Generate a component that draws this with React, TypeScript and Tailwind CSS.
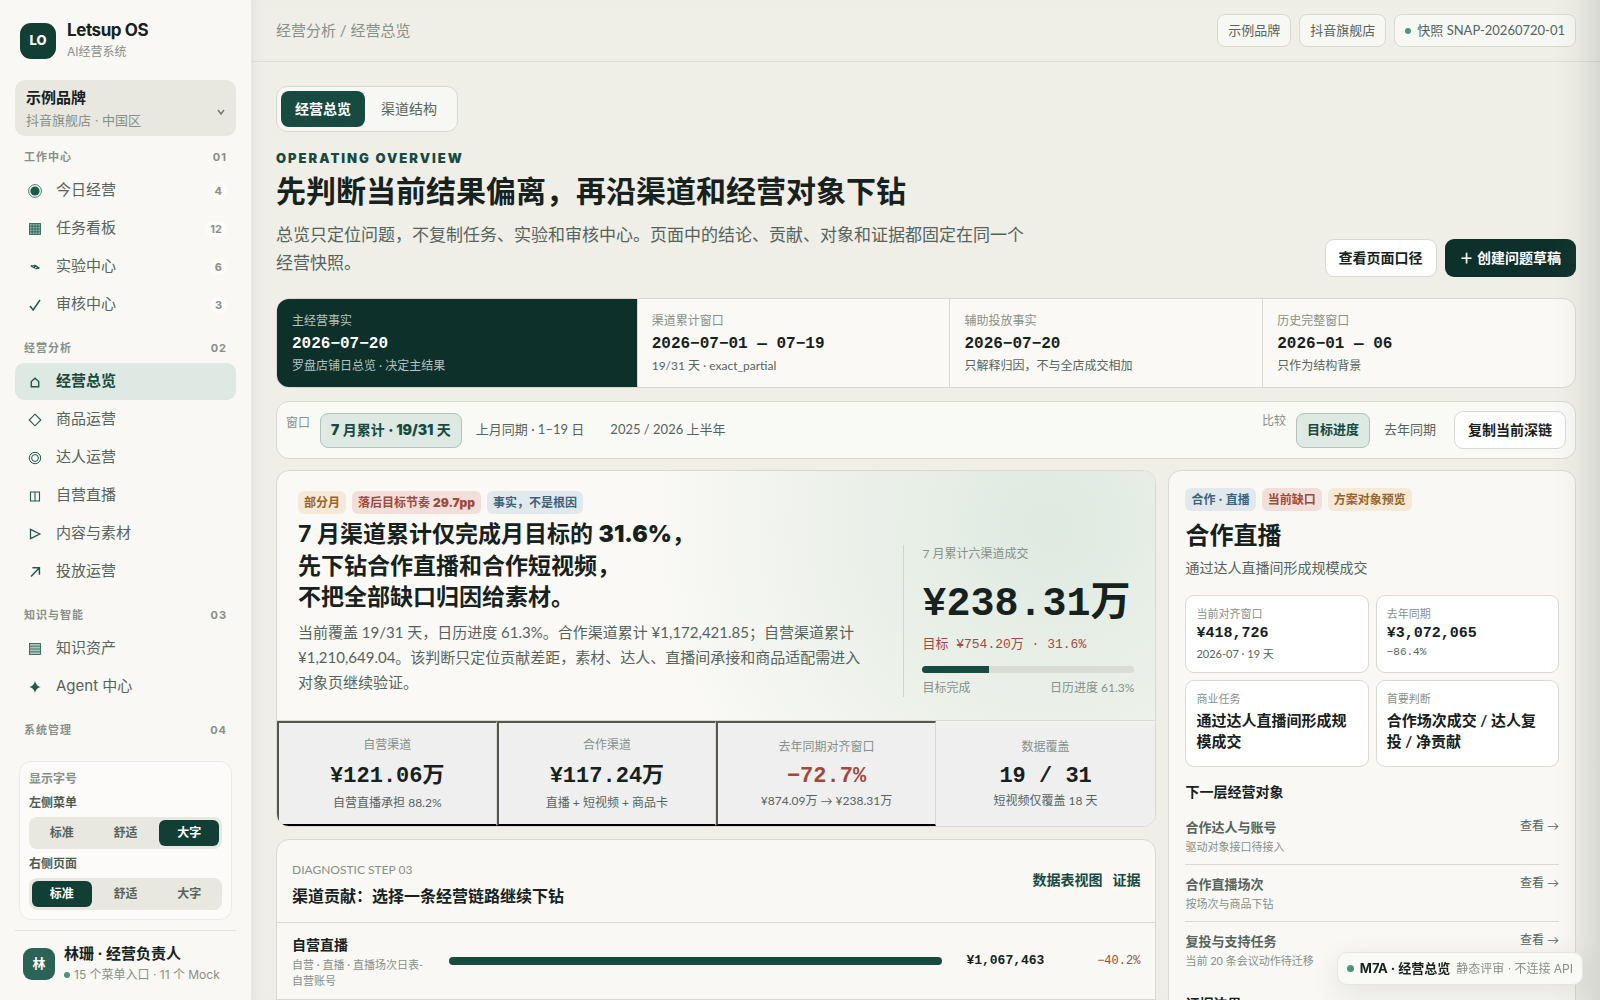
import { useState } from "react";
import type { ReactNode } from "react";

const GROUPS = [
  {
    title: "工作中心",
    no: "01",
    items: [
      { icon: "target", label: "今日经营", count: "4" },
      { icon: "board", label: "任务看板", count: "12" },
      { icon: "pulse", label: "实验中心", count: "6" },
      { icon: "check", label: "审核中心", count: "3" },
    ],
  },
  {
    title: "经营分析",
    no: "02",
    items: [
      { icon: "home", label: "经营总览", active: true },
      { icon: "diamond", label: "商品运营" },
      { icon: "rings", label: "达人运营" },
      { icon: "split", label: "自营直播" },
      { icon: "play", label: "内容与素材" },
      { icon: "arrow", label: "投放运营" },
    ],
  },
  {
    title: "知识与智能",
    no: "03",
    items: [
      { icon: "lines", label: "知识资产" },
      { icon: "star", label: "Agent 中心" },
    ],
  },
  { title: "系统管理", no: "04", items: [] },
] as {
  title: string;
  no: string;
  items: { icon: string; label: string; count?: string; active?: boolean }[];
}[];

const GLYPHS: Record<string, ReactNode> = {
  target: (
    <>
      <circle cx="8" cy="8" r="6.4" strokeWidth="0.8" />
      <circle cx="8" cy="8" r="4.6" fill="currentColor" stroke="none" />
    </>
  ),
  board: (
    <>
      <rect x="2" y="2" width="12" height="12" fill="#8fb0a6" stroke="none" />
      <path d="M2.5 2.5h11v11h-11zM5.2 2.5v11M8 2.5v11M10.8 2.5v11M2.5 5.2h11M2.5 8h11M2.5 10.8h11" strokeWidth="0.7" />
    </>
  ),
  pulse: <path d="M3.8 6.6l3.6 2.2.6-2.4 4.4 3M4.2 7.6l3-1M8.4 9.6l3.400-.6" strokeWidth="1.3" />,
  check: <path d="M3 9l3.2 4L13 3" strokeWidth="1.5" />,
  home: <path d="M4.3 12.8V7.6L8 4.2l3.7 3.4v5.2z" strokeWidth="1.4" />,
  diamond: <path d="M8 2.2L13.8 8 8 13.8 2.2 8z" strokeWidth="1.1" />,
  rings: (
    <>
      <circle cx="8" cy="8" r="5.7" strokeWidth="1" />
      <circle cx="8" cy="8" r="3.4" strokeWidth="1" />
    </>
  ),
  split: <path d="M3.5 4h9v9h-9zM8 4v9" strokeWidth="1.1" />,
  play: <path d="M3.5 3.4L12.8 8l-9.3 4.6z" strokeWidth="1.3" />,
  arrow: <path d="M4 12.4l8.4-8.6M5.4 3.8h7v7" strokeWidth="1.5" />,
  lines: (
    <>
      <rect x="2.5" y="2.5" width="11" height="11" fill="#a9c3bb" strokeWidth="0.8" />
      <path d="M2.5 5.2h11M2.5 8h11M2.5 10.8h11" strokeWidth="0.7" />
    </>
  ),
  star: <path d="M8 2c.9 3.6 2.4 5.1 6 6-3.6.9-5.1 2.4-6 6-.9-3.6-2.4-5.1-6-6 3.6-.9 5.1-2.4 6-6z" fill="currentColor" stroke="none" />,
};

function Glyph({ name }: { name: string }) {
  return (
    <svg viewBox="0 0 16 16" className="size-4 shrink-0 text-[#1d5a4c]" fill="none" stroke="currentColor" aria-hidden="true">
      {GLYPHS[name]}
    </svg>
  );
}

function SizeSwitch({ label, initial }: { label: string; initial: string }) {
  const [value, setValue] = useState(initial);
  return (
    <div role="group" aria-label={label}>
      <div className="mb-1 text-xs leading-5 font-bold text-[#4c5c54]">{label}</div>
      <div className="grid grid-cols-3 gap-1 rounded-lg bg-[#e8e7e0] p-[3px]">
        {["标准", "舒适", "大字"].map((o) => (
          <button
            key={o}
            type="button"
            aria-pressed={value === o}
            onClick={() => setValue(o)}
            className={
              value === o
                ? "h-[26px] rounded-md bg-[#123f35] text-xs font-bold text-white"
                : "h-[26px] rounded-md text-xs font-bold text-[#56645d]"
            }
          >
            {o}
          </button>
        ))}
      </div>
    </div>
  );
}

function Sidebar() {
  return (
    <aside className="flex h-full w-[251px] shrink-0 flex-col bg-[#f9f8f4] px-[15px] pt-5 font-['Inter','Noto_Sans_CJK_SC',sans-serif]">
      <div className="flex items-center gap-[11px] px-[5px]">
        <div className="grid size-9 place-items-center rounded-[11px] bg-[#123f35] text-[13px] font-extrabold text-white">LO</div>
        <div>
          <div className="text-[17px] leading-[21px] font-bold tracking-tight text-[#17211d]">Letsup OS</div>
          <div className="text-xs leading-[21px] text-[#87908a]">AI经营系统</div>
        </div>
      </div>

      <button type="button" className="mt-[18px] flex h-14 shrink-0 items-center justify-between rounded-[10px] bg-[#e8e7e0] pr-2.5 pl-[11px] text-left">
        <span>
          <span className="block text-[15px] leading-6 font-bold text-[#17211d]">示例品牌</span>
          <span className="block text-[13px] leading-[21px] text-[#87908a]">抖音旗舰店 · 中国区</span>
        </span>
        <svg viewBox="0 0 10 10" className="mt-2 size-2.5" fill="none" stroke="#6f7a74" strokeWidth="1.5" aria-hidden="true">
          <path d="M2 3l3 4 3-4" />
        </svg>
      </button>

      <nav className="min-h-0 flex-1 overflow-hidden pt-[9px]">
        {GROUPS.map((g) => (
          <section key={g.no} className="mb-[13px]">
            <div className="flex h-[27px] items-center justify-between px-[9px] pb-[3px] text-[11px] font-bold tracking-[1px] text-[#87908a]">
              <h2>{g.title}</h2>
              <span>{g.no}</span>
            </div>
            <ul className="space-y-px">
              {g.items.map((i) => (
                <li key={i.label}>
                  <a
                    href="#"
                    className={
                      i.active
                        ? "flex h-[37px] items-center gap-[13px] rounded-[9px] bg-[#dde9e2] pr-[9px] pl-3 text-[15px] font-bold text-[#174a40]"
                        : "flex h-[37px] items-center gap-[13px] rounded-[9px] pr-[9px] pl-3 text-[15px] text-[#56645d]"
                    }
                  >
                    <Glyph name={i.icon} />
                    <span className="flex-1">{i.label}</span>
                    {i.count && (
                      <span className="rounded-full bg-[#fdfcfa] px-[5px] text-[11px] leading-4 font-bold text-[#87908a]">{i.count}</span>
                    )}
                  </a>
                </li>
              ))}
            </ul>
          </section>
        ))}
      </nav>

      <div className="mx-1 space-y-[5px] rounded-xl border border-[#ebeae5] bg-[#fcfbf9] px-[9px] pt-2 pb-[9px]">
        <div className="text-xs leading-[18px] font-bold text-[#87908a]">显示字号</div>
        <SizeSwitch label="左侧菜单" initial="大字" />
        <SizeSwitch label="右侧页面" initial="标准" />
      </div>

      <div className="mt-2.5 flex h-[70px] shrink-0 items-center gap-[9px] border-t border-[#e2e2dc] pb-1 pl-2">
        <div className="grid size-8 shrink-0 place-items-center rounded-[9px] bg-[#2b6456] text-[13px] font-bold text-white">林</div>
        <div className="whitespace-nowrap">
          <div className="text-[15px] leading-[22px] font-bold text-[#17211d]">林珊 · 经营负责人</div>
          <div className="flex items-center gap-1 text-xs leading-5 text-[#87908a]">
            <span className="size-1.5 rounded-full bg-[#4d9478]" />
            15 个菜单入口 · 11 个 Mock
          </div>
        </div>
      </div>
    </aside>
  );
}

function Heavy({ children }: { children: ReactNode }) {
  return <span className="font-['Inter','Noto_Sans_CJK_SC',sans-serif] font-black">{children}</span>;
}

function Tag({ tone, children }: { tone: "amber" | "red" | "blue"; children: ReactNode }) {
  const tones = {
    amber: "bg-[#f5e9d7] text-[#9a6424]",
    red: "bg-[#f3dfd9] text-[#a04a3b]",
    blue: "bg-[#e2e9ec] text-[#3a647c]",
  };
  return <span className={`rounded-md px-1.5 text-xs leading-[23px] font-bold ${tones[tone]}`}>{children}</span>;
}

const FACTS = [
  ["主经营事实", "2026−07−20", "罗盘店铺日总览 · 决定主结果"],
  ["渠道累计窗口", "2026−07−01 — 07−19", "19/31 天 · exact_partial"],
  ["辅助投放事实", "2026−07−20", "只解释归因，不与全店成交相加"],
  ["历史完整窗口", "2026−01 — 06", "只作为结构背景"],
];

const MONO = "font-['Liberation_Mono','Noto_Sans_CJK_SC',monospace]";

function FactStrip() {
  return (
    <section className="mt-[21px] grid grid-cols-[1.15fr_1fr_1fr_1fr] overflow-hidden rounded-[13px] border border-[#d9d9d2] bg-[#faf9f5]">
      {FACTS.map(([label, value, note], i) => (
        <div
          key={label}
          className={
            i === 0
              ? "bg-[#0d302b] px-[15px] pt-3 pb-3 text-white"
              : "border-l border-[#d9d9d2] px-[14px] pt-3 pb-3 text-[#17211d]"
          }
        >
          <div className={i === 0 ? "text-xs leading-5 text-[#b4c4be]" : "text-xs leading-5 text-[#87908a]"}>{label}</div>
          <div className={`text-base leading-[26px] font-bold ${MONO}`}>{value}</div>
          <div className={i === 0 ? "text-xs leading-[18px] text-[#b4c4be]" : "text-xs leading-[18px] text-[#56645d]"}>{note}</div>
        </div>
      ))}
    </section>
  );
}

function FilterBar() {
  const on = "h-[35px] rounded-lg border border-[#aec4b9] bg-[#dde9e2] px-2.5 text-[13px] font-bold text-[#174a40]";
  const off = "h-[35px] rounded-lg px-3 text-[13px] text-[#56645d]";
  return (
    <section className="mt-[13px] flex items-center justify-between rounded-[13px] border border-[#d9d9d2] bg-[#f9f9f6] px-[9px] py-[9px]">
      <div className="flex items-center gap-0.5" role="group" aria-label="窗口">
        <span className="mr-2 self-start text-xs leading-5 text-[#87908a]">窗口</span>
        <button type="button" className="h-[35px] rounded-lg border border-[#aec4b9] bg-[#dde9e2] px-2.5 text-sm font-bold text-[#174a40]">
          <Heavy>7</Heavy> 月累计 <Heavy>· 19/31</Heavy> 天
        </button>
        <button type="button" className={off}>上月同期 · 1–19 日</button>
        <button type="button" className={off}>2025 / 2026 上半年</button>
      </div>
      <div className="flex items-center gap-0.5" role="group" aria-label="比较">
        <span className="mr-2 self-start text-xs leading-5 text-[#87908a]">比较</span>
        <button type="button" className={on}>目标进度</button>
        <button type="button" className={off}>去年同期</button>
        <button type="button" className="ml-1 h-[38px] rounded-[9px] border border-[#d9d9d2] bg-white px-[13px] text-sm font-bold text-[#17211d]">复制当前深链</button>
      </div>
    </section>
  );
}

function Hero() {
  const cell = "flex flex-col items-center justify-center bg-[#efefef]";
  const button = "flex h-[105px] flex-col items-center justify-center border-t-2 border-r border-b-2 border-l-2 border-t-[#55574f] border-r-[#d9d9d2] border-b-black border-l-[#55574f] bg-[#efefef]";
  const label = "mb-1.5 text-xs leading-[18px] text-[#87908a]";
  const note = "text-xs leading-[18px] text-[#56645d]";
  return (
    <section className="overflow-hidden rounded-[13px] border border-[#d9d9d2] bg-[#faf9f5]">
      <div className="grid grid-cols-[minmax(0,1fr)_231px] gap-5 bg-[radial-gradient(circle_at_88%_22%,#dfeae1,#ecf1ea_26%,transparent_50%)] px-[21px] pt-5 pb-[23px]">
        <div>
          <div className="flex gap-1.5">
            <Tag tone="amber">部分月</Tag>
            <Tag tone="red">
              落后目标节奏 <Heavy>29.7pp</Heavy>
            </Tag>
            <Tag tone="blue">事实，不是根因</Tag>
          </div>
          <h2 className="mt-1 text-[23px] leading-[31px] font-bold text-[#17211d]">
            <span className="font-black">7</span> 月渠道累计仅完成月目标的 <Heavy>31.6%</Heavy>，
            <br />
            先下钻合作直播和合作短视频，
            <br />
            不把全部缺口归因给素材。
          </h2>
          <p className="mt-2 max-w-[575px] pb-0.5 text-[15px] leading-[25px] text-[#56645d]">
            当前覆盖 19/31 天，日历进度 61.3%。合作渠道累计 ¥1,172,421.85；自营渠道累计 ¥1,210,649.04。该判断只定位贡献差距，素材、达人、直播间承接和商品适配需进入对象页继续验证。
          </p>
        </div>
        <div className="self-end border-l border-[#d0d5ce] pl-[18px]">
          <div className="text-xs leading-[18px] text-[#87908a]">7 月累计六渠道成交</div>
          <div className={`mt-3 text-[40px] leading-[60px] font-bold whitespace-nowrap text-[#17211d] ${MONO}`}>¥238.31万</div>
          <div className={`text-[13px] leading-5 text-[#a04a3b] ${MONO}`}>目标 ¥754.20万 · 31.6%</div>
          <div className="mt-[11px] h-[7px] overflow-hidden rounded-full bg-[#dbdbd5]">
            <div className="h-full bg-[#174a40]" style={{ width: "31.6%" }} />
          </div>
          <div className="mt-1.5 flex justify-between text-xs leading-[18px] text-[#87908a]">
            <span>目标完成</span>
            <span>日历进度 61.3%</span>
          </div>
        </div>
      </div>
      <div className="grid grid-cols-4 border-t border-[#d9d9d2]">
        <button type="button" className={button}>
          <span className={label}>自营渠道</span>
          <span className={`text-[22px] leading-[34px] font-bold text-[#17211d] ${MONO}`}>¥121.06万</span>
          <span className={note}>自营直播承担 88.2%</span>
        </button>
        <button type="button" className={button}>
          <span className={label}>合作渠道</span>
          <span className={`text-[22px] leading-[34px] font-bold text-[#17211d] ${MONO}`}>¥117.24万</span>
          <span className={note}>直播 + 短视频 + 商品卡</span>
        </button>
        <button type="button" className={button}>
          <span className={label}>去年同期对齐窗口</span>
          <span className={`text-[22px] leading-[30px] font-bold text-[#a04a3b] ${MONO}`}>−72.7%</span>
          <span className={note}>¥874.09万 → ¥238.31万</span>
        </button>
        <div className={cell}>
          <span className={label}>数据覆盖</span>
          <span className={`text-[22px] leading-[30px] font-bold text-[#17211d] ${MONO}`}>19 / 31</span>
          <span className={note}>短视频仅覆盖 18 天</span>
        </div>
      </div>
    </section>
  );
}

const CHANNELS = [
  { name: "自营直播", note: "自营 · 直播 · 直播场次日表-自营账号", value: "¥1,067,463", delta: "−40.2%", share: 100 },
];

function Contribution() {
  return (
    <section className="overflow-hidden rounded-[13px] border border-[#d9d9d2] bg-[#f9f8f4] pb-6">
      <header className="flex items-center justify-between border-b border-[#d9d9d2] px-[15px] pt-[18px] pb-3">
        <div>
          <div className="text-xs leading-6 text-[#87908a]">DIAGNOSTIC STEP 03</div>
          <h2 className="text-base leading-7 font-bold text-[#17211d]">渠道贡献：选择一条经营链路继续下钻</h2>
        </div>
        <div className="flex gap-2.5 pb-2 text-sm font-bold text-[#174a40]">
          <button type="button">数据表视图</button>
          <button type="button">证据</button>
        </div>
      </header>
      {CHANNELS.map((c) => (
        <div key={c.name} className="grid grid-cols-[145px_minmax(0,1fr)_90px_84px] items-center gap-3 border-b border-[#d9d9d2] px-[15px] py-2.5">
          <div className="pr-2">
            <div className="text-sm leading-6 font-bold text-[#17211d]">{c.name}</div>
            <div className="text-[11px] leading-4 text-[#87908a]">{c.note}</div>
          </div>
          <div className="h-2">
            <div className="h-full rounded-full bg-[#174a40]" style={{ width: `${c.share}%` }} />
          </div>
          <div className={`text-right text-[13px] font-bold text-[#17211d] ${MONO}`}>{c.value}</div>
          <div className={`text-right text-xs text-[#a04a3b] ${MONO}`}>{c.delta}</div>
        </div>
      ))}
    </section>
  );
}

const OBJECTS = [
  ["合作达人与账号", "驱动对象接口待接入"],
  ["合作直播场次", "按场次与商品下钻"],
  ["复投与支持任务", "当前 20 条会议动作待迁移"],
];

function Detail() {
  const box = "rounded-[9px] border border-[#d9d9d2] bg-white px-2.5 pt-[9px]";
  const label = "text-[11px] leading-[18px] text-[#87908a]";
  const value = "text-[15px] leading-[21px] font-bold text-[#17211d]";
  return (
    <aside className="rounded-[13px] border border-[#d9d9d2] bg-[#f9f8f4] px-4 pt-[17px] pb-6">
      <div className="flex gap-1.5">
        <Tag tone="blue">
          合作 <Heavy>·</Heavy> 直播
        </Tag>
        <Tag tone="red">当前缺口</Tag>
        <Tag tone="amber">方案对象预览</Tag>
      </div>
      <h2 className="mt-2 text-2xl leading-8 font-bold text-[#17211d]">合作直播</h2>
      <p className="mt-1.5 text-sm leading-[22px] text-[#56645d]">通过达人直播间形成规模成交</p>
      <div className="mt-4 grid grid-cols-2 gap-[7px]">
        <div className={`${box} pb-[9px]`}>
          <div className={label}>当前对齐窗口</div>
          <div className={`${value} ${MONO}`}>¥418,726</div>
          <div className="text-[11px] leading-[19px] text-[#56645d]">2026-07 · 19 天</div>
        </div>
        <div className={`${box} pb-[9px]`}>
          <div className={label}>去年同期</div>
          <div className={`${value} ${MONO}`}>¥3,072,065</div>
          <div className={`text-[11px] leading-4 text-[#56645d] ${MONO}`}>−86.4%</div>
        </div>
        <div className={`${box} pb-3.5`}>
          <div className={label}>商业任务</div>
          <div className={`mt-0.5 ${value}`}>通过达人直播间形成规模成交</div>
        </div>
        <div className={`${box} pb-3.5`}>
          <div className={label}>首要判断</div>
          <div className={`mt-0.5 ${value}`}>合作场次成交 / 达人复投 / 净贡献</div>
        </div>
      </div>
      <h3 className="mt-[15px] text-sm leading-5 font-bold text-[#17211d]">下一层经营对象</h3>
      <ul className="mt-1.5">
        {OBJECTS.map(([name, note], i) => (
          <li key={name} className={i < 2 ? "flex h-[57px] items-start justify-between border-b border-[#d9d9d2] pt-[9px]" : "flex h-[57px] items-start justify-between pt-[9px]"}>
            <div>
              <div className="text-[13px] leading-5 font-bold text-[#56645d]">{name}</div>
              <div className="text-[11px] leading-5 text-[#87908a]">{note}</div>
            </div>
            <a href="#" className="text-xs leading-[18px] text-[#56645d]">查看 →</a>
          </li>
        ))}
      </ul>
      <h3 className="mt-[15px] text-sm leading-5 font-bold text-[#17211d]">证据边界</h3>
    </aside>
  );
}

export default function App() {
  const chip = "flex h-[33px] items-center rounded-lg border border-[#d9d9d2] bg-[#f7f7f3] px-2.5";
  return (
    <div className="flex h-screen overflow-hidden bg-[#efeee7]">
      <Sidebar />
      <main className="relative min-w-0 flex-1 overflow-hidden bg-[#efeee7] font-['Lato','Noto_Sans_CJK_SC',sans-serif] shadow-[inset_12px_0_12px_-8px_#e3e5e0]">
        <header className="flex h-[62px] items-center justify-between border-b border-[#dbdcd5] pr-6 pl-[25px]">
          <div className="text-[15px] text-[#87908a]">经营分析 / 经营总览</div>
          <div className="flex gap-2 text-[13px] text-[#56645d]">
            <span className={chip}>示例品牌</span>
            <span className={chip}>抖音旗舰店</span>
            <span className={chip}>
              <span className="mr-1.5 size-1.5 rounded-full bg-[#4d9478]" />
              快照 SNAP-20260720-01
            </span>
          </div>
        </header>

        <div className="pt-6 pr-6 pb-10 pl-[25px]">
          <div className="inline-flex rounded-[11px] border border-[#d9d9d2] bg-[#f7f7f3] p-1">
            <button type="button" className="h-9 rounded-lg bg-[#174a40] px-3.5 text-sm font-bold text-white">经营总览</button>
            <button type="button" className="h-9 rounded-lg px-4 text-sm text-[#56645d]">渠道结构</button>
          </div>

          <div className="mt-[18px] flex items-end justify-between">
            <div>
              <div className="font-['Inter','Noto_Sans_CJK_SC',sans-serif] text-[13px] leading-[17px] font-black tracking-[2px] text-[#174a40]">OPERATING OVERVIEW</div>
              <h1 className="mt-0.5 text-[30px] leading-[42px] font-bold text-[#17211d]">先判断当前结果偏离，再沿渠道和经营对象下钻</h1>
              <p className="mt-2.5 max-w-[760px] text-[17px] leading-7 text-[#56645d]">
                总览只定位问题，不复制任务、实验和审核中心。页面中的结论、贡献、对象和证据都固定在同一个经营快照。
              </p>
            </div>
            <div className="flex gap-2">
              <button type="button" className="h-[38px] rounded-[9px] border border-[#d9d9d2] bg-white px-[13px] text-sm font-bold text-[#17211d]">查看页面口径</button>
              <button type="button" className="h-[38px] rounded-[9px] bg-[#0d302b] px-[15px] text-sm font-bold text-white">＋ 创建问题草稿</button>
            </div>
          </div>

          <FactStrip />
          <FilterBar />

          <div className="mt-[11px] grid grid-cols-[2.16fr_1fr] items-start gap-3">
            <div className="grid min-w-0 gap-3">
              <Hero />
              <Contribution />
            </div>
            <Detail />
          </div>
        </div>

        <div className="pointer-events-none absolute inset-y-0 right-0 w-12 bg-linear-to-r from-transparent via-[#7f8c840d] to-[#7f8c8438]" />
      </main>

      <div className="fixed right-[17px] bottom-[15px] flex h-[33px] items-center rounded-[10px] border border-[#e6e6e0] bg-[#f9f9f6] px-[9px] font-['Inter','Noto_Sans_CJK_SC',sans-serif] shadow-[0_8px_30px_#17211d1a]">
        <span className="mr-1.5 size-[7px] rounded-full bg-[#4d9478]" />
        <span className="mr-1.5 text-[13px] font-bold text-[#17211d]">M7A · 经营总览</span>
        <span className="text-xs text-[#87908a]">静态评审 · 不连接 API</span>
      </div>
    </div>
  );
}
